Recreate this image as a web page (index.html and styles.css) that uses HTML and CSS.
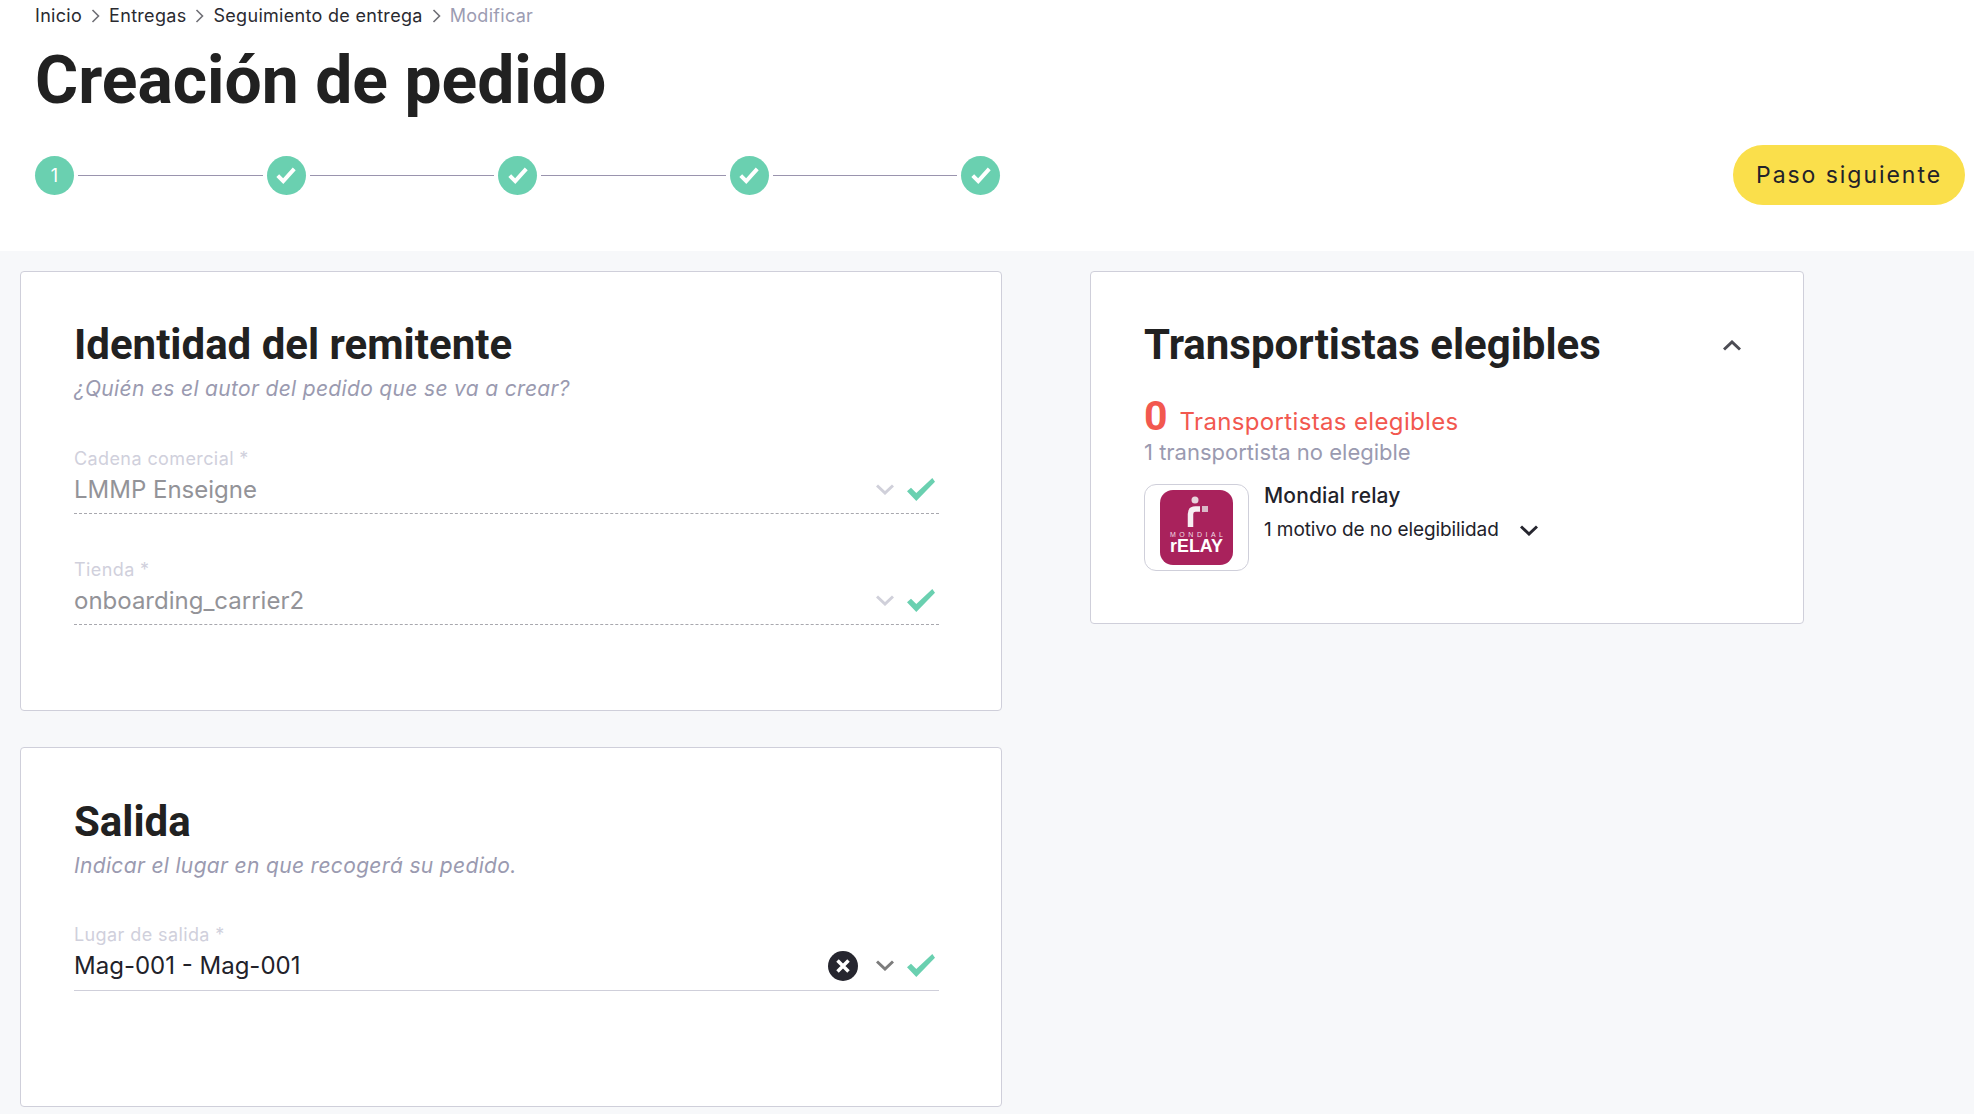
FILE: index.html
```html
<!DOCTYPE html>
<html lang="es">
<head>
    <meta charset="UTF-8">
    <meta name="viewport" content="width=device-width, initial-scale=1.0">
    <title>Creación de pedido</title>
    <link rel="stylesheet" href="styles.css">
</head>
<body>
    <header class="top">
        <nav class="crumbs">
            <span>Inicio</span>
            <svg class="crumb-sep" viewBox="0 0 8 14"><path d="M1 1l6 6-6 6"/></svg>
            <span>Entregas</span>
            <svg class="crumb-sep" viewBox="0 0 8 14"><path d="M1 1l6 6-6 6"/></svg>
            <span>Seguimiento de entrega</span>
            <svg class="crumb-sep" viewBox="0 0 8 14"><path d="M1 1l6 6-6 6"/></svg>
            <span class="crumb-current">Modificar</span>
        </nav>
        <h1>Creación de pedido</h1>
        <div class="top-row">
            <div class="stepper">
                <div class="step">1</div>
                <div class="step-line"></div>
                <div class="step"><svg viewBox="0 0 20 20"><path d="M2.500 10.500l5 5 10-11"/></svg></div>
                <div class="step-line"></div>
                <div class="step"><svg viewBox="0 0 20 20"><path d="M2.500 10.500l5 5 10-11"/></svg></div>
                <div class="step-line"></div>
                <div class="step"><svg viewBox="0 0 20 20"><path d="M2.500 10.500l5 5 10-11"/></svg></div>
                <div class="step-line"></div>
                <div class="step"><svg viewBox="0 0 20 20"><path d="M2.500 10.500l5 5 10-11"/></svg></div>
            </div>
            <button class="next-btn">Paso siguiente</button>
        </div>
    </header>

    <main class="content">
        <div class="left-col">
            <section class="card card-sender">
                <h2>Identidad del remitente</h2>
                <p class="card-sub">¿Quién es el autor del pedido que se va a crear?</p>
                <div class="field field-disabled">
                    <div class="field-label">Cadena comercial *</div>
                    <div class="field-row">
                        <span class="field-value">LMMP Enseigne</span>
                        <svg class="chev" viewBox="0 0 18 11"><path d="M1 1.500l8 7.500 8-7.500"/></svg>
                        <svg class="tick" viewBox="0 0 28 23"><polygon points="0,13.300 4,9.800 9.300,15 25.300,0 28,3.700 9.300,23"/></svg>
                    </div>
                </div>
                <div class="field field-disabled">
                    <div class="field-label">Tienda *</div>
                    <div class="field-row">
                        <span class="field-value">onboarding_carrier2</span>
                        <svg class="chev" viewBox="0 0 18 11"><path d="M1 1.500l8 7.500 8-7.500"/></svg>
                        <svg class="tick" viewBox="0 0 28 23"><polygon points="0,13.300 4,9.800 9.300,15 25.300,0 28,3.700 9.300,23"/></svg>
                    </div>
                </div>
            </section>

            <section class="card card-exit">
                <h2>Salida</h2>
                <p class="card-sub">Indicar el lugar en que recogerá su pedido.</p>
                <div class="field">
                    <div class="field-label">Lugar de salida *</div>
                    <div class="field-row">
                        <span class="field-value">Mag-001 - Mag-001</span>
                        <svg class="clear" viewBox="0 0 30 30"><circle cx="15" cy="15" r="15"/><path d="M9.500 9.500l11 11M20.500 9.500l-11 11"/></svg>
                        <svg class="chev" viewBox="0 0 18 11"><path d="M1 1.500l8 7.500 8-7.500"/></svg>
                        <svg class="tick" viewBox="0 0 28 23"><polygon points="0,13.300 4,9.800 9.300,15 25.300,0 28,3.700 9.300,23"/></svg>
                    </div>
                </div>
            </section>
        </div>

        <section class="card card-carriers">
            <div class="carriers-head">
                <h2>Transportistas elegibles</h2>
                <svg class="collapse" viewBox="0 0 18 11"><path d="M1 9.500l8-7.500 8 7.500"/></svg>
            </div>
            <div class="count-line"><span class="count">0</span> <span class="count-label">Transportistas elegibles</span></div>
            <div class="not-eligible">1 transportista no elegible</div>
            <div class="carrier">
                <div class="carrier-logo">
                    <svg viewBox="0 0 73 75">
                        <rect width="73" height="75" rx="13" fill="#a9225c"/>
                        <circle cx="35" cy="10" r="3.500" fill="#e8d3dc"/>
                        <rect x="42" y="16" width="6" height="6" fill="#d9b9c7"/>
                        <path d="M30.500 37V24q0-5 5-5h4.500" fill="none" stroke="#f7eef2" stroke-width="5.500"/>
                        <text class="logo-small" x="10" y="46.500" textLength="53">MONDIAL</text>
                        <text class="logo-big" x="10" y="62" textLength="53" lengthAdjust="spacingAndGlyphs">rELAY</text>
                    </svg>
                </div>
                <div class="carrier-info">
                    <div class="carrier-name">Mondial relay</div>
                    <div class="carrier-reason">
                        <span>1 motivo de no elegibilidad</span>
                        <svg class="reason-chev" viewBox="0 0 18 11"><path d="M1 1.500l8 7.500 8-7.500"/></svg>
                    </div>
                </div>
            </div>
        </section>
    </main>
</body>
</html>
```

FILE: styles.css
```css
body {
    margin: 0;
    height: 1114px;
    overflow: hidden;
    font-family: Inter, "Liberation Sans", sans-serif;
    color: #22222a;
    background-color: #f7f8fa;
}
.top {
    background: white;
    height: 251px;
    padding: 0 9px 0 35px;
    box-sizing: border-box;
}
.crumbs {
    display: flex;
    align-items: center;
    gap: 9px;
    height: 31px;
    font-size: 18px;
    letter-spacing: 0.3px;
    color: #2a2a30;
}
.crumb-sep {
    width: 9px;
    height: 14px;
    fill: none;
    stroke: #6f6f76;
    stroke-width: 1.6;
}
.crumb-current {
    color: #9c9cb2;
}
h1 {
    margin: 12px 0 0;
    font-family: Roboto, sans-serif;
    font-weight: 700;
    font-size: 66px;
    line-height: 75px;
    color: #212121;
}
.top-row {
    display: flex;
    align-items: center;
    justify-content: space-between;
    margin-top: 27px;
}
.stepper {
    display: flex;
    align-items: center;
    width: 965px;
}
.step {
    width: 39px;
    height: 39px;
    flex: none;
    display: flex;
    align-items: center;
    justify-content: center;
    border-radius: 50%;
    background: #6ad0b0;
    color: white;
    font-size: 18px;
}
.step svg {
    width: 22px;
    height: 22px;
    fill: none;
    stroke: white;
    stroke-width: 3.600;
}
.step-line {
    flex: 1;
    height: 1px;
    margin: 0 4px;
    background: #9a94ae;
}
.next-btn {
    width: 232px;
    height: 60px;
    border: none;
    border-radius: 30px;
    background: #fadf4b;
    color: #22222a;
    font-family: Inter, "Liberation Sans", sans-serif;
    font-size: 23px;
    letter-spacing: 1.95px;
    cursor: pointer;
}
.content {
    display: flex;
    align-items: flex-start;
    padding: 20px 0 0 20px;
}
.left-col {
    width: 982px;
    display: flex;
    flex-direction: column;
    gap: 36px;
    flex: none;
}
.card {
    box-sizing: border-box;
    background: white;
    border: 1px solid #cfcfda;
    border-radius: 4px;
    padding: 46px 52px 0 53px;
}
.card-sender {
    height: 440px;
}
.card-exit {
    height: 360px;
    padding-top: 47px;
}
.card-exit .field {
    margin-top: 43px;
}
.card-exit .field-row {
    height: 45px;
}
.card-carriers {
    width: 714px;
    height: 353px;
    margin-left: 88px;
}
h2 {
    margin: 0;
    font-family: Roboto, sans-serif;
    font-weight: 700;
    font-size: 42px;
    line-height: 54px;
    color: #212121;
}
.card-sub {
    margin: 2px 0 0;
    font-size: 21px;
    letter-spacing: 0.33px;
    font-style: italic;
    line-height: 30px;
    color: #9a9ab0;
}
.field {
    width: 865px;
    margin-top: 44px;
}
.field + .field {
    margin-top: 45px;
}
.field-label {
    font-size: 18px;
    letter-spacing: 0.4px;
    line-height: 22px;
    color: #d0d0dc;
}
.field-row {
    display: flex;
    align-items: center;
    height: 44px;
    padding-bottom: 5px;
    box-sizing: border-box;
    border-bottom: 1px solid #cfcfda;
}
.field-value {
    flex: 1;
    font-size: 24px;
    color: #22222a;
}
.field-disabled .field-row {
    border-bottom: 1px dashed #a8a8ae;
}
.field-disabled .field-value {
    color: #939398;
}
.chev {
    width: 18px;
    height: 11px;
    flex: none;
    fill: none;
    stroke: #7c7c7c;
    stroke-width: 3;
}
.field-disabled .chev {
    stroke: #d0d0da;
}
.tick {
    width: 28px;
    height: 23px;
    flex: none;
    fill: #6ad0b0;
    margin: 0 4px 0 13px;
}
.clear {
    width: 30px;
    height: 30px;
    flex: none;
    margin-right: 18px;
    fill: #26262f;
    stroke: white;
    stroke-width: 3.500;
}
.clear circle {
    stroke: none;
}
.carriers-head {
    display: flex;
    align-items: center;
    justify-content: space-between;
    padding-right: 10px;
}
.collapse {
    width: 18px;
    height: 11px;
    fill: none;
    stroke: #4c4c54;
    stroke-width: 3;
}
.count-line {
    margin-top: 20px;
    display: flex;
    align-items: baseline;
    gap: 12px;
    height: 44px;
    color: #f2584f;
}
.count {
    font-family: Roboto, sans-serif;
    font-weight: 700;
    font-size: 41px;
}
.count-label {
    font-size: 24px;
    letter-spacing: 0.35px;
}
.not-eligible {
    margin-top: 3px;
    font-size: 22px;
    line-height: 26px;
    color: #9a9ab0;
}
.carrier {
    display: flex;
    gap: 15px;
    margin-top: 19px;
}
.carrier-logo {
    box-sizing: border-box;
    width: 105px;
    height: 87px;
    flex: none;
    display: flex;
    align-items: center;
    justify-content: center;
    border: 1px solid #cfcfda;
    border-radius: 12px;
}
.carrier-logo svg {
    width: 73px;
    height: 75px;
}
.logo-small {
    font-family: "Liberation Sans", sans-serif;
    font-size: 7px;
    fill: #f0dfe6;
}
.logo-big {
    font-family: "Liberation Sans", sans-serif;
    font-weight: 700;
    font-size: 19px;
    fill: white;
}
.carrier-name {
    font-size: 21px;
    letter-spacing: 0.15px;
    font-weight: 500;
    line-height: 24px;
}
.carrier-reason {
    display: flex;
    align-items: center;
    gap: 21px;
    margin-top: 10px;
    font-size: 19px;
    letter-spacing: -0.1px;
    line-height: 24px;
}
.reason-chev {
    width: 18px;
    height: 11px;
    flex: none;
    fill: none;
    stroke: #26262f;
    stroke-width: 3;
}
```
